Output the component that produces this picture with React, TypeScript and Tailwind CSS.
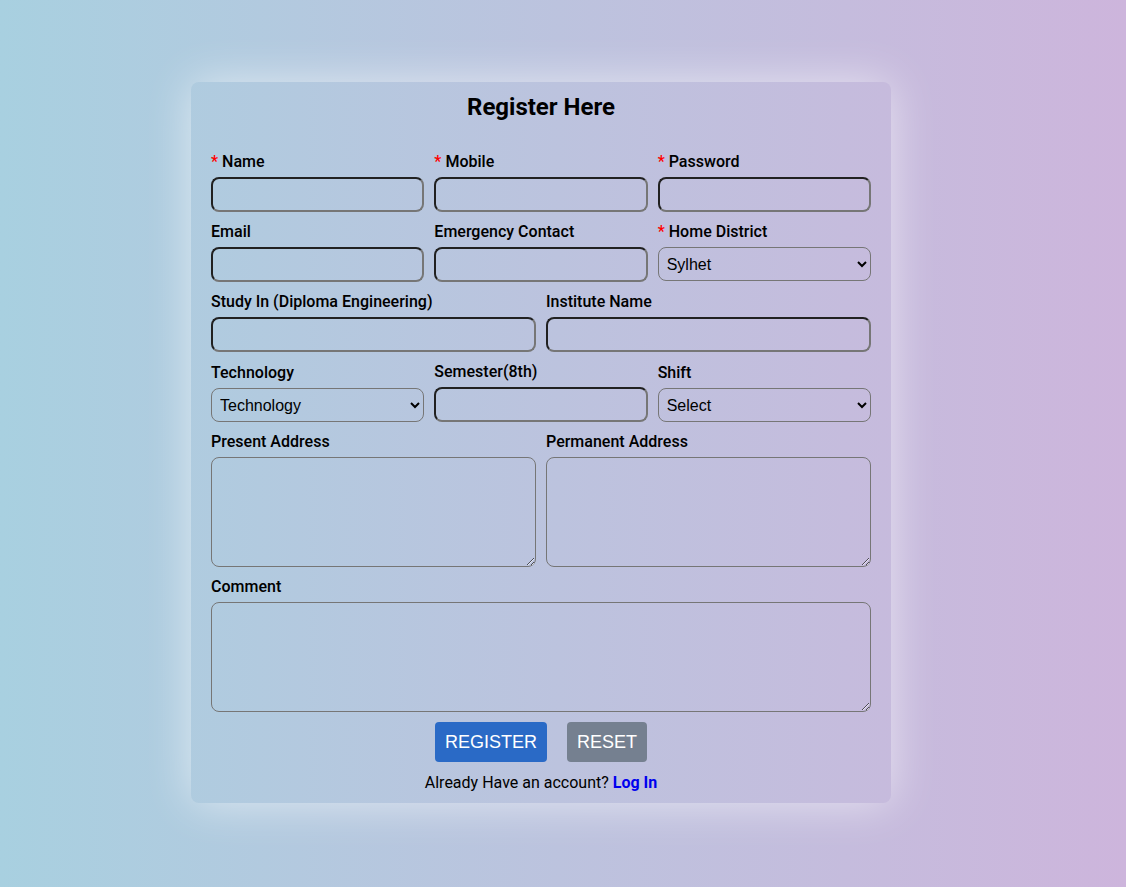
import React from "react";

const inputCls =
  "h-[35px] w-full rounded-lg border-2 border-[#767676] [border-style:inset] bg-transparent px-2 outline-none";
const selectCls =
  "h-[34px] w-full rounded-lg border border-[#767676] bg-transparent pl-[4px] pr-1 text-[16px] text-black [font-family:'Liberation_Sans',Arial,sans-serif] outline-none";
const areaCls =
  "h-[110px] w-full rounded-lg border border-[#767676] bg-transparent p-2 outline-none";

function Label({ text, required }: { text: string; required?: boolean }) {
  return (
    <label className="mb-[5px] block text-[16px] leading-5 font-medium text-black [font-family:'Roboto_Medium',Roboto,sans-serif]">
      {required && <span className="text-[#ff0000]">* </span>}
      {text}
    </label>
  );
}

function Field({ label, required }: { label: string; required?: boolean }) {
  return (
    <div className="flex flex-col">
      <Label text={label} required={required} />
      <input type="text" className={inputCls} />
    </div>
  );
}

export default function App() {
  return (
    <div className="min-h-screen w-full bg-gradient-to-r from-[#a8d0e0] to-[#cdb5dc] pt-[82px] [font-family:Roboto,'Liberation_Sans',sans-serif]">
      <div className="ml-[191px] w-[700px] rounded-lg px-5 pt-[9px] pb-[10px] shadow-[0_0_45px_rgba(255,255,255,0.6)]">
        <h2 className="mb-[29px] text-center text-[24px] leading-8 font-bold text-black">
          Register Here
        </h2>

        <div className="flex flex-col gap-[10px]">
          <div className="grid grid-cols-3 gap-x-[10px]">
            <Field label="Name" required />
            <Field label="Mobile" required />
            <Field label="Password" required />
          </div>

          <div className="grid grid-cols-3 gap-x-[10px]">
            <Field label="Email" />
            <Field label="Emergency Contact" />
            <div className="flex flex-col">
              <Label text="Home District" required />
              <select className={selectCls} defaultValue="Sylhet">
                <option>Sylhet</option>
                <option>Dhaka</option>
                <option>Chattogram</option>
              </select>
            </div>
          </div>

          <div className="grid grid-cols-2 gap-x-[10px]">
            <Field label="Study In (Diploma Engineering)" />
            <Field label="Institute Name" />
          </div>

          <div className="grid grid-cols-3 items-end gap-x-[10px]">
            <div className="flex flex-col">
              <Label text="Technology" />
              <select className={selectCls} defaultValue="Technology">
                <option>Technology</option>
                <option>Computer</option>
                <option>Civil</option>
              </select>
            </div>
            <Field label="Semester(8th)" />
            <div className="flex flex-col">
              <Label text="Shift" />
              <select className={selectCls} defaultValue="Select">
                <option>Select</option>
                <option>1st</option>
                <option>2nd</option>
              </select>
            </div>
          </div>

          <div className="grid grid-cols-2 gap-x-[10px]">
            <div className="flex flex-col">
              <Label text="Present Address" />
              <textarea className={areaCls} />
            </div>
            <div className="flex flex-col">
              <Label text="Permanent Address" />
              <textarea className={areaCls} />
            </div>
          </div>

          <div className="flex flex-col">
            <Label text="Comment" />
            <textarea className={areaCls} />
          </div>
        </div>

        <div className="mt-[10px] flex justify-center gap-5 [font-family:'Liberation_Sans',Arial,sans-serif]">
          <button
            type="button"
            className="h-10 w-[112px] rounded bg-[#2a6ac6] text-[18px] text-white"
          >
            REGISTER
          </button>
          <button
            type="button"
            className="h-10 w-[80px] rounded bg-[#758090] text-[18px] text-white"
          >
            RESET
          </button>
        </div>

        <p className="mt-[11px] text-center text-[16px] leading-5 text-black">
          Already Have an account?{" "}
          <a href="#" className="font-bold text-[#0000ee]">
            Log In
          </a>
        </p>
      </div>
    </div>
  );
}
